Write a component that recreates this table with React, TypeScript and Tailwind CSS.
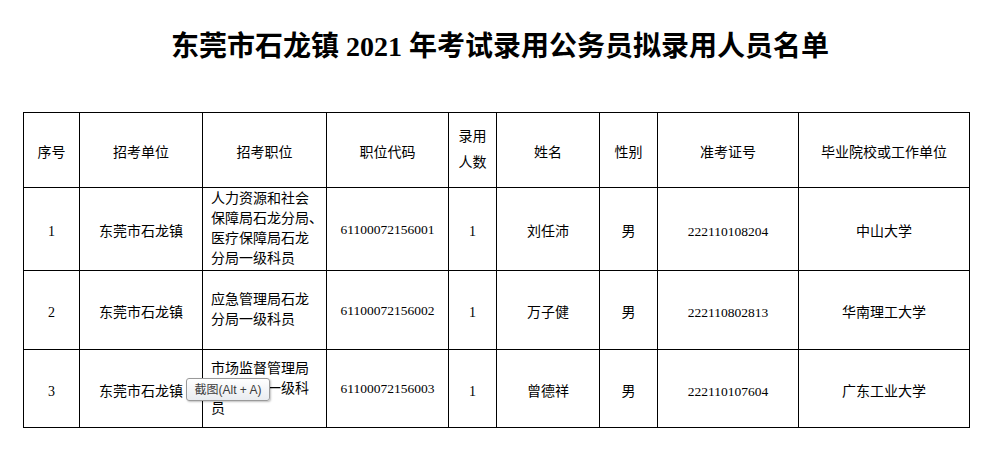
const columns = [
  { label: "序号", width: "w-[56px]" },
  { label: "招考单位", width: "w-[123px]" },
  { label: "招考职位", width: "w-[124px]" },
  { label: "职位代码", width: "w-[122px]" },
  { label: "录用人数", width: "w-[48px]" },
  { label: "姓名", width: "w-[103px]" },
  { label: "性别", width: "w-[58px]" },
  { label: "准考证号", width: "w-[141px]" },
  { label: "毕业院校或工作单位", width: "w-[171px]" },
];

const rows = [
  {
    no: "1",
    unit: "东莞市石龙镇",
    post: ["人力资源和社会", "保障局石龙分局、", "医疗保障局石龙", "分局一级科员"],
    code: "61100072156001",
    count: "1",
    name: "刘任沛",
    sex: "男",
    ticket: "222110108204",
    school: "中山大学",
    height: "h-[83px]",
  },
  {
    no: "2",
    unit: "东莞市石龙镇",
    post: ["应急管理局石龙", "分局一级科员"],
    code: "61100072156002",
    count: "1",
    name: "万子健",
    sex: "男",
    ticket: "222110802813",
    school: "华南理工大学",
    height: "h-[79px]",
  },
  {
    no: "3",
    unit: "东莞市石龙镇",
    post: ["市场监督管理局", "石龙分局一级科", "员"],
    code: "61100072156003",
    count: "1",
    name: "曾德祥",
    sex: "男",
    ticket: "222110107604",
    school: "广东工业大学",
    height: "h-[78px]",
  },
];

const cell = "border border-black text-center align-middle p-0";
const body = `${cell} pt-[6px]`;

export default function App() {
  return (
    <div className="min-h-[453px] bg-white pt-[30px] text-black font-['Liberation_Serif','Noto_Sans_CJK_SC',serif]">
      <h1 className="text-center text-[28px] leading-[34px] font-bold font-['Liberation_Serif','Noto_Sans_CJK_SC',serif]">
        东莞市石龙镇 2021 年考试录用公务员拟录用人员名单
      </h1>

      <div className="relative ml-[23px] mt-[48px] w-[946px]">
        <table className="w-[946px] table-fixed border-collapse text-[14px] leading-[20px]">
          <colgroup>
            {columns.map((c) => (
              <col key={c.label} className={c.width} />
            ))}
          </colgroup>
          <thead>
            <tr className="h-[75px]">
              <th className={`${cell} pt-[5px] font-normal`}>序号</th>
              <th className={`${cell} pt-[5px] font-normal`}>招考单位</th>
              <th className={`${cell} pt-[5px] font-normal`}>招考职位</th>
              <th className={`${cell} pt-[5px] font-normal`}>职位代码</th>
              <th className={`${cell} font-normal leading-[26px]`}>
                录用
                <br />
                人数
              </th>
              <th className={`${cell} pt-[5px] font-normal`}>姓名</th>
              <th className={`${cell} pt-[5px] font-normal`}>性别</th>
              <th className={`${cell} pt-[5px] font-normal`}>准考证号</th>
              <th className={`${cell} pt-[5px] font-normal`}>毕业院校或工作单位</th>
            </tr>
          </thead>
          <tbody>
            {rows.map((r) => (
              <tr key={r.no} className={r.height}>
                <td className={body}>{r.no}</td>
                <td className={body}>{r.unit}</td>
                <td className={`${cell} text-left pl-[8px]`}>
                  {r.post.map((line, i) => (
                    <div key={i} className="whitespace-nowrap">
                      {line}
                    </div>
                  ))}
                </td>
                <td className={`${cell} pt-[1px] text-[13.5px]`}>{r.code}</td>
                <td className={body}>{r.count}</td>
                <td className={body}>{r.name}</td>
                <td className={body}>{r.sex}</td>
                <td className={`${body} text-[13.5px]`}>{r.ticket}</td>
                <td className={body}>{r.school}</td>
              </tr>
            ))}
          </tbody>
        </table>

        {/* 截图提示 */}
        <div className="absolute left-[163px] top-[266px] flex h-[23px] w-[84px] items-center justify-center rounded-[3px] border border-[#9a9a9a] bg-gradient-to-b from-white to-[#e9ecf0] text-[12px] text-[#3c3c3c] shadow-[1px_1px_2px_rgba(0,0,0,0.25)] font-['Liberation_Sans','Noto_Sans_CJK_SC',sans-serif]">
          截图(Alt + A)
        </div>
      </div>
    </div>
  );
}
